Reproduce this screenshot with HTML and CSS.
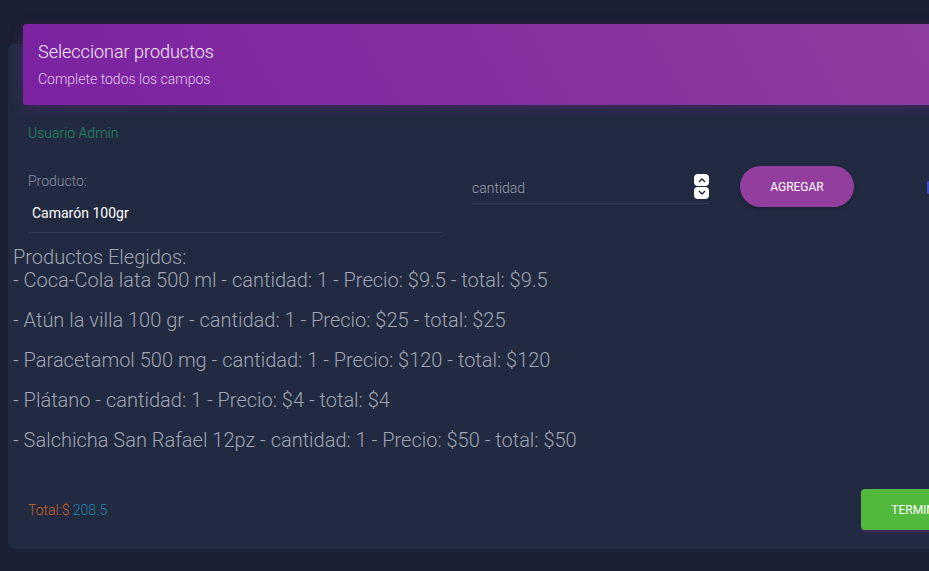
FILE: index.html
```html
<!DOCTYPE html>
<html lang="es">
<head>
<meta charset="utf-8">
<title>Seleccionar productos</title>
<link rel="stylesheet" href="styles.css">
</head>
<body>
<div class="card">
  <div class="card-header">
    <h4 class="card-title">Seleccionar productos</h4>
    <p class="card-category">Complete todos los campos</p>
  </div>
  <div class="card-body">
    <p class="user">Usuario Admin</p>
    <div class="form-row">
      <div class="field field-product">
        <label class="field-label">Producto:</label>
        <div class="select-value">Camarón 100gr</div>
      </div>
      <div class="field field-qty">
        <span class="placeholder">cantidad</span>
        <span class="spinner">
          <span class="spin-btn"><svg width="10" height="6" viewBox="0 0 10 6"><path d="M2 5 L5 2 L8 5" fill="none" stroke="#222" stroke-width="1.4"/></svg></span>
          <span class="spin-btn"><svg width="10" height="6" viewBox="0 0 10 6"><path d="M2 1 L5 4 L8 1" fill="none" stroke="#222" stroke-width="1.4"/></svg></span>
        </span>
      </div>
      <button class="btn-add">AGREGAR</button>
      <span class="blue-edge"></span>
    </div>
    <div class="chosen">
      <div class="chosen-title">Productos Elegidos:</div>
      <p class="item">- Coca-Cola lata 500 ml - cantidad: 1 - Precio: $9.5 - total: $9.5</p>
      <p class="item">- Atún la villa 100 gr - cantidad: 1 - Precio: $25 - total: $25</p>
      <p class="item">- Paracetamol 500 mg - cantidad: 1 - Precio: $120 - total: $120</p>
      <p class="item">- Plátano - cantidad: 1 - Precio: $4 - total: $4</p>
      <p class="item">- Salchicha San Rafael 12pz - cantidad: 1 - Precio: $50 - total: $50</p>
    </div>
    <div class="footer-row">
      <div class="total"><span class="total-label">Total:$</span> <span class="total-value">208.5</span></div>
      <button class="btn-finish">TERMINAR</button>
    </div>
  </div>
</div>
</body>
</html>
```

FILE: styles.css
```css
html, body {
  margin: 0;
  padding: 0;
  overflow: hidden;
  background: #1c2034;
  font-family: Roboto, "Noto Sans", sans-serif;
  width: 929px;
  height: 571px;
}
body {
  padding: 44px 0 0 8px;
  box-sizing: border-box;
}
.card {
  display: flow-root;
  width: 1000px;
  height: 505px;
  background: #222a42;
  border-radius: 6px;
  box-sizing: border-box;
}
.card-header {
  margin: -20px 15px 0;
  padding: 15px 15px 17px;
  background: linear-gradient(60deg, #7b22a1, #8f3e9f);
  border-radius: 3px;
  box-shadow: 0 4px 16px -4px rgba(130, 40, 160, 0.45);
  height: 81px;
  box-sizing: border-box;
}
.card-title {
  margin: 0;
  font-size: 18px;
  line-height: 24px;
  font-weight: 300;
  color: #f6ecf9;
  padding-top: 1px;
}
.card-category {
  margin: 5px 0 0;
  font-size: 14px;
  line-height: 20px;
  font-weight: 300;
  color: #e2c6ec;
}
.card-body {
  padding: 18px 0 0 0;
}
.user {
  margin: 0 0 0 20px;
  font-size: 14px;
  line-height: 20px;
  font-weight: 300;
  color: #1f8d63;
}
.form-row {
  display: flex;
  align-items: flex-start;
  margin-top: 28px;
  padding-left: 20px;
  position: relative;
}
.field-product {
  width: 414px;
  border-bottom: 1px solid #343b52;
  height: 62px;
  box-sizing: border-box;
}
.field-label {
  display: block;
  font-size: 14px;
  line-height: 20px;
  font-weight: 300;
  color: #8a8fa2;
}
.select-value {
  margin-top: 12px;
  padding-left: 4px;
  font-size: 14px;
  line-height: 20px;
  color: #ffffff;
}
.field-qty {
  margin-left: 30px;
  margin-top: 5px;
  width: 237px;
  height: 28px;
  border-bottom: 1px solid #353c54;
  box-sizing: border-box;
  display: flex;
  justify-content: space-between;
  align-items: flex-start;
}
.placeholder {
  margin-top: 2px;
  font-size: 14px;
  line-height: 20px;
  font-weight: 300;
  color: #9a9fb0;
}
.spinner {
  display: flex;
  flex-direction: column;
  margin-top: -2px;
}
.spin-btn {
  width: 15px;
  height: 12px;
  background: #ffffff;
  border-radius: 4px;
  display: flex;
  align-items: center;
  justify-content: center;
  margin-bottom: 1px;
}
.btn-add {
  margin-left: 31px;
  margin-top: -5px;
  width: 114px;
  height: 41px;
  border: none;
  border-radius: 21px;
  background: #933e9e;
  color: #ffffff;
  font-family: Roboto, sans-serif;
  font-size: 12px;
  font-weight: 400;
  box-shadow: 0 2px 4px rgba(0,0,0,0.2);
}
.blue-edge {
  position: absolute;
  left: 919px;
  top: 10px;
  width: 6px;
  height: 13px;
  background: #3a4bd0;
  border-radius: 2px 0 0 2px;
}
.chosen {
  margin: 13px 0 0 5px;
  color: #a0a4b2;
  font-weight: 300;
}
.chosen-title {
  font-size: 20px;
  line-height: 22px;
}
.item {
  margin: 0 0 16px;
  font-size: 20px;
  line-height: 24px;
}
.footer-row {
  display: flex;
  align-items: center;
  padding-left: 20px;
  margin-top: 37px;
}
.total {
  font-size: 14px;
  font-weight: 300;
  line-height: 20px;
}
.total-label { color: #cc6428; }
.total-value { color: #1e87ac; }
.btn-finish {
  margin-left: 754px;
  width: 120px;
  height: 41px;
  border: none;
  border-radius: 4px;
  background: #51b93b;
  color: #ffffff;
  font-family: Roboto, sans-serif;
  font-size: 12px;
  text-align: left;
  padding-left: 30px;
  box-shadow: 0 2px 3px rgba(120, 40, 140, 0.4);
}
```
